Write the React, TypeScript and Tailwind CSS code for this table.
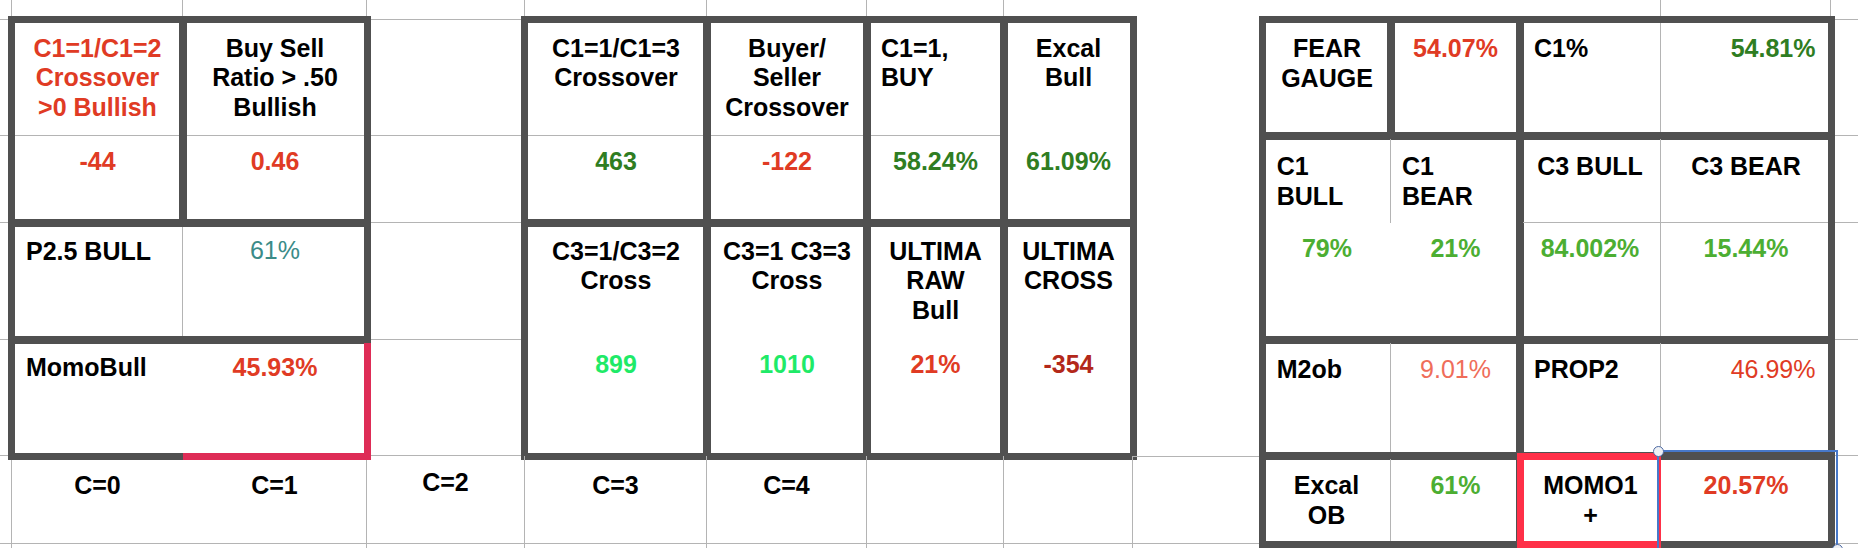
import React from "react";

const L = "border-[#b4b4b4]";
const FR = "outline-[7px] outline-solid outline-[#505050] outline-offset-[-3.5px]";
const T = "text-[25px] leading-[29.6px] whitespace-nowrap";

export default function App() {
  return (
    <div className="w-[1858px] h-[548px] overflow-hidden bg-white text-black font-['Liberation_Sans',Arial,Helvetica,sans-serif]">
      <div className="grid grid-cols-[12px_171px_184px_158px_182px_160px_137px_129px_130px_128px_129px_141px_170px_27px] grid-rows-[20px_116px_87px_117px_116px_88px_4px] w-[1858px] h-[548px]">
        {/* top partial row gridlines */}
        <div className={`col-start-1 row-start-1 border-r border-b ${L}`} />
        <div className={`col-start-2 row-start-1 border-r ${L}`} />
        <div className={`col-start-3 row-start-1 border-r ${L}`} />
        <div className={`col-start-4 row-start-1 border-r border-b ${L}`} />
        <div className={`col-start-5 row-start-1 border-r ${L}`} />
        <div className={`col-start-6 row-start-1 border-r ${L}`} />
        <div className={`col-start-7 row-start-1 border-r ${L}`} />
        <div className={`col-start-12 row-start-1 border-r ${L}`} />
        <div className={`col-start-13 row-start-1 border-r ${L}`} />
        <div className={`col-start-14 row-start-1 border-b ${L}`} />

        {/* left margin column */}
        <div className={`col-start-1 row-start-2 border-b ${L}`} />
        <div className={`col-start-1 row-start-3 border-b ${L}`} />
        <div className={`col-start-1 row-start-4 border-b ${L}`} />
        <div className={`col-start-1 row-start-5 border-b ${L}`} />
        <div className={`col-start-1 row-start-6 border-r border-b ${L}`} />
        <div className={`col-start-1 row-start-7 border-r ${L}`} />

        {/* C=2 column */}
        <div className={`col-start-4 row-start-2 border-b ${L}`} />
        <div className={`col-start-4 row-start-3 border-b ${L}`} />
        <div className={`col-start-4 row-start-4 border-b ${L}`} />
        <div className={`col-start-4 row-start-5 border-b ${L}`} />

        {/* right margin column */}
        <div className={`col-start-14 row-start-2 border-b ${L}`} />
        <div className={`col-start-14 row-start-3 border-b ${L}`} />
        <div className={`col-start-14 row-start-4 border-b ${L}`} />
        <div className={`col-start-14 row-start-5 border-b ${L}`} />
        <div className={`col-start-14 row-start-6 border-b ${L}`} />

        {/* ===== LEFT TABLE ===== */}
        <div className={`col-start-2 row-start-2 border-b ${L} ${T} pt-[13.7px] text-center font-bold text-[#e03b24]`}>
          C1=1/C1=2<br />Crossover<br />&gt;0 Bullish
        </div>
        <div className={`col-start-2 row-start-3 ${T} pt-[10.7px] text-center font-bold text-[#e03b24]`}>-44</div>
        <div className={`col-start-3 row-start-2 border-b ${L} ${T} pt-[13.7px] text-center font-bold`}>
          Buy Sell<br />Ratio &gt; .50<br />Bullish
        </div>
        <div className={`col-start-3 row-start-3 ${T} pt-[10.7px] text-center font-bold text-[#e03b24]`}>0.46</div>
        <div className={`col-start-2 row-start-4 border-r ${L} ${T} pt-[13.7px] pl-[14px] font-bold`}>P2.5 BULL</div>
        <div className={`col-start-3 row-start-4 ${T} pt-[13.4px] text-center text-[#3b8b88]`}>61%</div>
        <div className={`col-start-2 row-start-5 ${T} pt-[13.4px] pl-[14px] font-bold`}>MomoBull</div>
        <div className={`col-start-3 row-start-5 relative ${T} pt-[13.4px] text-center font-bold text-[#e03b24]`}>
          45.93%
          <div className="absolute left-0 top-[3px] right-[-4px] bottom-[-3.5px] border-r-[7px] border-b-[7px] border-[#de2c56] z-10" />
        </div>
        <div className={`col-start-2 row-start-2 row-span-2 ${FR}`} />
        <div className={`col-start-3 row-start-2 row-span-2 ${FR}`} />
        <div className={`col-start-2 col-span-2 row-start-4 ${FR}`} />
        <div className={`col-start-2 col-span-2 row-start-5 ${FR}`} />

        {/* ===== MIDDLE TABLE ===== */}
        <div className={`col-start-5 row-start-2 border-b ${L} ${T} pt-[13.7px] text-center font-bold`}>
          C1=1/C1=3<br />Crossover
        </div>
        <div className={`col-start-5 row-start-3 ${T} pt-[10.7px] text-center font-bold text-[#2f7d22]`}>463</div>
        <div className={`col-start-6 row-start-2 border-b ${L} ${T} pt-[13.7px] text-center font-bold`}>
          Buyer/<br />Seller<br />Crossover
        </div>
        <div className={`col-start-6 row-start-3 ${T} pt-[10.7px] text-center font-bold text-[#e03b24]`}>-122</div>
        <div className={`col-start-7 row-start-2 border-b ${L} ${T} pt-[13.7px] pl-[14px] font-bold`}>
          C1=1,<br />BUY
        </div>
        <div className={`col-start-7 row-start-3 ${T} pt-[10.7px] text-center font-bold text-[#2f7d22]`}>58.24%</div>
        <div className={`col-start-8 row-start-2 ${T} pt-[13.7px] text-center font-bold`}>
          Excal<br />Bull
        </div>
        <div className={`col-start-8 row-start-3 ${T} pt-[10.7px] text-center font-bold text-[#2f7d22]`}>61.09%</div>

        <div className={`col-start-5 row-start-4 ${T} pt-[13.7px] text-center font-bold`}>
          C3=1/C3=2<br />Cross
        </div>
        <div className={`col-start-5 row-start-5 ${T} pt-[10.4px] text-center font-bold text-[#1fea68]`}>899</div>
        <div className={`col-start-6 row-start-4 ${T} pt-[13.7px] text-center font-bold`}>
          C3=1 C3=3<br />Cross
        </div>
        <div className={`col-start-6 row-start-5 ${T} pt-[10.4px] text-center font-bold text-[#1fea68]`}>1010</div>
        <div className={`col-start-7 row-start-4 ${T} pt-[13.7px] text-center font-bold`}>
          ULTIMA<br />RAW<br />Bull
        </div>
        <div className={`col-start-7 row-start-5 ${T} pt-[10.4px] text-center font-bold text-[#e03b24]`}>21%</div>
        <div className={`col-start-8 row-start-4 ${T} pt-[13.7px] text-center font-bold`}>
          ULTIMA<br />CROSS
        </div>
        <div className={`col-start-8 row-start-5 ${T} pt-[10.4px] text-center font-bold text-[#b3281a]`}>-354</div>

        <div className={`col-start-5 row-start-2 row-span-2 ${FR}`} />
        <div className={`col-start-6 row-start-2 row-span-2 ${FR}`} />
        <div className={`col-start-7 row-start-2 row-span-2 ${FR}`} />
        <div className={`col-start-8 row-start-2 row-span-2 ${FR}`} />
        <div className={`col-start-5 row-start-4 row-span-2 ${FR}`} />
        <div className={`col-start-6 row-start-4 row-span-2 ${FR}`} />
        <div className={`col-start-7 row-start-4 row-span-2 ${FR}`} />
        <div className={`col-start-8 row-start-4 row-span-2 ${FR}`} />

        {/* ===== BOTTOM LABEL ROW ===== */}
        <div className={`col-start-2 row-start-6 border-b ${L} ${T} pt-[15px] text-center font-bold`}>C=0</div>
        <div className={`col-start-3 row-start-6 border-r border-b ${L} ${T} pt-[15px] text-center font-bold`}>C=1</div>
        <div className={`col-start-4 row-start-6 border-r border-b ${L} ${T} pt-[12.4px] text-center font-bold`}>C=2</div>
        <div className={`col-start-5 row-start-6 border-r border-b ${L} ${T} pt-[15px] text-center font-bold`}>C=3</div>
        <div className={`col-start-6 row-start-6 border-r border-b ${L} ${T} pt-[15px] text-center font-bold`}>C=4</div>
        <div className={`col-start-7 row-start-6 border-r border-b ${L}`} />
        <div className={`col-start-8 row-start-6 border-r border-b ${L}`} />
        <div className={`col-start-9 row-start-6 border-t border-b ${L}`} />
        <div className={`col-start-3 row-start-7 border-r ${L}`} />
        <div className={`col-start-4 row-start-7 border-r ${L}`} />
        <div className={`col-start-5 row-start-7 border-r ${L}`} />
        <div className={`col-start-6 row-start-7 border-r ${L}`} />
        <div className={`col-start-7 row-start-7 border-r ${L}`} />
        <div className={`col-start-8 row-start-7 border-r ${L}`} />

        {/* ===== RIGHT TABLE ===== */}
        <div className={`col-start-10 row-start-2 ${T} pt-[14.4px] text-center font-bold`}>
          FEAR<br />GAUGE
        </div>
        <div className={`col-start-11 row-start-2 ${T} pt-[14.4px] text-center font-bold text-[#e03b24]`}>54.07%</div>
        <div className={`col-start-12 row-start-2 border-r ${L} ${T} pt-[14.4px] pl-[14px] font-bold`}>C1%</div>
        <div className={`col-start-13 row-start-2 ${T} pt-[14.4px] pr-[15.5px] text-right font-bold text-[#2f7d22]`}>54.81%</div>
        <div className={`col-start-10 row-start-2 ${FR}`} />
        <div className={`col-start-11 row-start-2 ${FR}`} />
        <div className={`col-start-12 col-span-2 row-start-2 ${FR}`} />

        <div className={`col-start-10 row-start-3 border-r ${L} ${T} pt-[16px] pl-[13.7px] font-bold`}>
          C1<br />BULL
        </div>
        <div className={`col-start-11 row-start-3 ${T} pt-[16px] pl-[11px] font-bold`}>
          C1<br />BEAR
        </div>
        <div className={`col-start-10 row-start-4 ${T} pt-[11.4px] text-center font-bold text-[#4cae32]`}>79%</div>
        <div className={`col-start-11 row-start-4 ${T} pt-[11.4px] text-center font-bold text-[#4cae32]`}>21%</div>
        <div className={`col-start-10 col-span-2 row-start-3 row-span-2 ${FR}`} />

        <div className={`col-start-12 row-start-3 border-r border-b ${L} ${T} pt-[16px] text-center font-bold`}>C3 BULL</div>
        <div className={`col-start-13 row-start-3 border-b ${L} ${T} pt-[16px] text-center font-bold`}>C3 BEAR</div>
        <div className={`col-start-12 row-start-4 border-r ${L} ${T} pt-[11.4px] text-center font-bold text-[#4cae32]`}>84.002%</div>
        <div className={`col-start-13 row-start-4 ${T} pt-[11.4px] text-center font-bold text-[#4cae32]`}>15.44%</div>
        <div className={`col-start-12 col-span-2 row-start-3 row-span-2 ${FR}`} />

        <div className={`col-start-10 row-start-5 border-r ${L} ${T} pt-[15px] pl-[13.7px] font-bold`}>M2ob</div>
        <div className={`col-start-11 row-start-5 ${T} pt-[15px] text-center text-[#ef6d5a]`}>9.01%</div>
        <div className={`col-start-12 row-start-5 border-r ${L} ${T} pt-[15px] pl-[14px] font-bold`}>PROP2</div>
        <div className={`col-start-13 row-start-5 ${T} pt-[15px] pr-[15.5px] text-right text-[#e03b24]`}>46.99%</div>
        <div className={`col-start-10 col-span-2 row-start-5 ${FR}`} />
        <div className={`col-start-12 col-span-2 row-start-5 ${FR}`} />

        <div className={`col-start-10 row-start-6 border-r ${L} ${T} pt-[15px] text-center font-bold`}>
          Excal<br />OB
        </div>
        <div className={`col-start-11 row-start-6 ${T} pt-[15px] text-center font-bold text-[#4cae32]`}>61%</div>
        <div className={`col-start-12 row-start-6 relative ${T} pt-[15px] text-center font-bold`}>
          MOMO1<br />+
          <div className="absolute left-[-3.5px] top-[-3.5px] bottom-[-3.5px] right-0 border-t-[7px] border-l-[7px] border-b-[7px] border-r-[4px] border-[#ff3048] z-10" />
        </div>
        <div className={`col-start-13 row-start-6 relative ${T} pt-[15px] text-center font-bold text-[#e03b24]`}>
          20.57%
          <div className="absolute left-[-4px] top-[-6px] w-[181px] h-[120px] border-2 border-[#4778c9] z-10" />
          <div className="absolute left-[-8.5px] top-[-10.5px] w-[11px] h-[11px] rounded-full border-[1.5px] border-[#4d6aa3] bg-[#eef0f4] z-20" />
          <div className="absolute left-[170.5px] top-[87.5px] w-[11px] h-[11px] rounded-full border-[1.5px] border-[#4d6aa3] bg-[#eef0f4] z-20" />
        </div>
        <div className={`col-start-10 col-span-2 row-start-6 ${FR}`} />
        <div className={`col-start-12 col-span-2 row-start-6 ${FR}`} />
      </div>
    </div>
  );
}
